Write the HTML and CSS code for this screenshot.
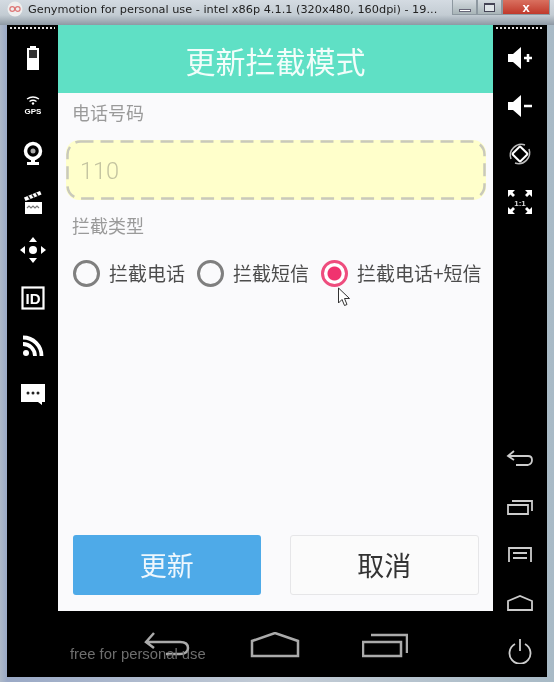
FILE: index.html
```html
<!DOCTYPE html>
<html lang="zh-CN">

<head>
  <meta charset="UTF-8" />
  <meta name="viewport" content="width=device-width, initial-scale=1.0" />
  <title>Genymotion for personal use</title>
  <link rel="stylesheet" href="styles.css">
</head>

<body>
  <div class="window">
    <div class="titlebar">
      <svg class="app-icon" width="16" height="16" viewBox="0 0 16 16">
        <circle cx="8" cy="8" r="7.5" fill="#eee" />
        <circle cx="5.3" cy="8" r="2.4" fill="none" stroke="#d77" stroke-width="1.2" />
        <circle cx="10.7" cy="8" r="2.4" fill="none" stroke="#d77" stroke-width="1.2" />
      </svg>
      <span class="title-text">Genymotion for personal use - intel x86p 4.1.1 (320x480, 160dpi) - 19...</span>
      <div class="controls">
        <div class="ctl ctl-min"><span class="min-glyph"></span></div>
        <div class="ctl ctl-max"><span class="max-glyph"></span></div>
        <div class="ctl ctl-close">x</div>
      </div>
    </div>

    <div class="frame">
      <!-- left toolbar -->
      <div class="side side-left">
        <div class="dots"></div>
        <div class="tool">
          <svg width="20" height="28" viewBox="0 0 20 28">
            <path d="M7 2h6v2h3v22H4V4h3z" fill="#fff" />
            <rect x="6" y="6" width="8" height="8" fill="#333" />
          </svg>
        </div>
        <div class="tool">
          <svg width="24" height="24" viewBox="0 0 24 24">
            <path d="M6 5q6-4 12 0M8.500 7.500q3.500-2.500 7 0" fill="none" stroke="#fff" stroke-width="1.400" />
            <circle cx="12" cy="9.500" r="1.200" fill="#fff" />
            <text x="12" y="20" class="gps">GPS</text>
          </svg>
        </div>
        <div class="tool">
          <svg width="22" height="26" viewBox="0 0 22 26">
            <circle cx="11" cy="10" r="7.500" fill="none" stroke="#fff" stroke-width="3.500" />
            <circle cx="11" cy="10" r="2.500" fill="#aaa" />
            <path d="M9 19h4v2h4v3H5v-3h4z" fill="#fff" />
          </svg>
        </div>
        <div class="tool">
          <svg width="24" height="26" viewBox="0 0 24 26">
            <path d="M4 13h17v12H4z" fill="#fff" />
            <path d="M6 19l2-2 2 2 2-2 2 2 2-2 2 2" fill="none" stroke="#777" stroke-width="1.200" />
            <path d="M3 8.500L19 2l1.500 3.500-16 6.500z" fill="#fff" />
            <path d="M7 7l2 3M11 5.500l2 3M15 4l2 3" stroke="#222" stroke-width="1.400" />
          </svg>
        </div>
        <div class="tool">
          <svg width="28" height="28" viewBox="0 0 28 28">
            <circle cx="14" cy="14" r="4" fill="#fff" />
            <path d="M14 1l4 5h-8zM14 27l4-5h-8zM1 14l5-4v8zM27 14l-5-4v8z" fill="#fff" />
          </svg>
        </div>
        <div class="tool">
          <svg width="24" height="24" viewBox="0 0 24 24">
            <rect x="1.500" y="1.500" width="21" height="21" fill="none" stroke="#fff" stroke-width="2.200" />
            <text x="12" y="17.500" class="id">ID</text>
          </svg>
        </div>
        <div class="tool">
          <svg width="24" height="24" viewBox="0 0 24 24">
            <circle cx="5" cy="19" r="3" fill="#fff" />
            <path d="M2 10a12 12 0 0 1 12 12M2 3.500a18.500 18.500 0 0 1 18.500 18.500" fill="none" stroke="#fff" stroke-width="3.800" />
          </svg>
        </div>
        <div class="tool">
          <svg width="26" height="24" viewBox="0 0 26 24">
            <path d="M1 2h24v18h-3v3l-4-3H1z" fill="#fff" />
            <circle cx="8" cy="11" r="1.500" fill="#222" />
            <circle cx="13" cy="11" r="1.500" fill="#222" />
            <circle cx="18" cy="11" r="1.500" fill="#222" />
          </svg>
        </div>
      </div>

      <!-- phone screen and navigation bar -->
      <div class="center">
        <div class="screen">
          <div class="header">更新拦截模式</div>
          <div class="form">
            <div class="label">电话号码</div>
            <div class="phone-input">
              110
              <svg class="dash" width="420" height="60" viewBox="0 0 420 60">
                <rect x="1.500" y="1.500" width="417" height="57" rx="13" />
              </svg>
            </div>
            <div class="label label-type">拦截类型</div>
            <div class="radios">
              <div class="radio"><span class="dot"></span>拦截电话</div>
              <div class="radio"><span class="dot"></span>拦截短信</div>
              <div class="radio radio-on"><span class="dot"></span>拦截电话+短信</div>
            </div>
            <svg class="cursor" width="14" height="21" viewBox="0 0 14 21">
              <path d="M1.500 1v15l3.500-3.500 2.500 6 2.500-1-2.500-6h5z" fill="#fff" stroke="#333" stroke-width="1" />
            </svg>
          </div>
          <div class="buttons">
            <div class="btn btn-update">更新</div>
            <div class="btn btn-cancel">取消</div>
          </div>
        </div>
        <div class="navbar">
          <svg width="46" height="26" viewBox="0 0 46 26">
            <path d="M10 1L2 10l8 6M2 10h34q8 0 8 6t-8 6H22" fill="none" stroke="#aaa" stroke-width="2.500" />
          </svg>
          <svg width="50" height="26" viewBox="0 0 50 26">
            <path d="M2 24V9L25 1l23 8v15z" fill="none" stroke="#aaa" stroke-width="2.500" />
          </svg>
          <svg class="nav-recent" width="46" height="26" viewBox="0 0 46 26">
            <path d="M1 10h38v14H1zM9 3h36v18" fill="none" stroke="#aaa" stroke-width="2.500" />
          </svg>
          <span class="watermark">free for personal use</span>
        </div>
      </div>

      <!-- right toolbar -->
      <div class="side side-right">
        <div class="dots"></div>
        <div class="tool">
          <svg width="26" height="24" viewBox="0 0 26 24">
            <path d="M1 8h5l8-7v22l-8-7H1z" fill="#fff" />
            <path d="M17 12h8M21 8v8" stroke="#fff" stroke-width="2.500" />
          </svg>
        </div>
        <div class="tool">
          <svg width="26" height="24" viewBox="0 0 26 24">
            <path d="M1 8h5l8-7v22l-8-7H1z" fill="#fff" />
            <path d="M17 12h8" stroke="#fff" stroke-width="2.500" />
          </svg>
        </div>
        <div class="tool">
          <svg width="26" height="26" viewBox="0 0 26 26">
            <path d="M4 18A11 11 0 0 1 18 4M22 8A11 11 0 0 1 8 22" fill="none" stroke="#bbb" stroke-width="1.500" />
            <rect x="7.500" y="7.500" width="11" height="11" rx="1" transform="rotate(45 13 13)" fill="none" stroke="#fff" stroke-width="2" />
          </svg>
        </div>
        <div class="tool">
          <svg width="26" height="26" viewBox="0 0 26 26">
            <path d="M1 1h7L5.500 3.500 8 6 6 8 3.500 5.500 1 8zM25 1h-7l2.500 2.500L18 6l2 2 2.500-2.500L25 8zM1 25h7l-2.500-2.500L8 20l-2-2-2.500 2.500L1 18zM25 25h-7l2.500-2.500L18 20l2-2 2.500 2.500L25 18z" fill="#fff" />
            <text x="13" y="16.500" class="ratio">1:1</text>
          </svg>
        </div>
        <div class="side-bottom">
          <div class="tool">
            <svg width="28" height="20" viewBox="0 0 28 20">
              <path d="M8 2L2 7l6 4M2 7h20q4 0 4 4t-4 5H10" fill="none" stroke="#ccc" stroke-width="1.800" />
            </svg>
          </div>
          <div class="tool">
            <svg width="26" height="18" viewBox="0 0 26 18">
              <path d="M1 7h20v9H1zM5 3h20v10" fill="none" stroke="#ccc" stroke-width="1.800" />
            </svg>
          </div>
          <div class="tool">
            <svg width="26" height="18" viewBox="0 0 26 18">
              <path d="M2 16V2h22v14M6 7h14M6 12h14" fill="none" stroke="#ccc" stroke-width="1.800" />
            </svg>
          </div>
          <div class="tool">
            <svg width="26" height="18" viewBox="0 0 26 18">
              <path d="M1 16V7l12-5 12 5v9z" fill="none" stroke="#ccc" stroke-width="1.800" />
            </svg>
          </div>
          <div class="tool">
            <svg width="24" height="26" viewBox="0 0 24 26">
              <path d="M7 6a10.500 10.500 0 1 0 10 0M12 1v12" fill="none" stroke="#ccc" stroke-width="1.800" />
            </svg>
          </div>
        </div>
      </div>
    </div>
  </div>
</body>

</html>
```

FILE: styles.css
```css
body {
  margin: 0;
  font-family: "Noto Sans CJK SC", "Liberation Sans", sans-serif;
  background-color: #a9b6c6;
}

.window {
  width: 554px;
  height: 682px;
  overflow: hidden;
  display: flex;
  flex-direction: column;
  background: linear-gradient(90deg, #aeb9c8 0, #9aa9c6 7px, #c3ccd6 50%, #a8bac6 100%);
  filter: blur(0.4px);
}

.titlebar {
  height: 25px;
  flex: none;
  display: flex;
  align-items: flex-start;
  padding-left: 7px;
  box-sizing: border-box;
  background: linear-gradient(180deg, #d4dbe2 0, #c3ccd3 60%, #8e99a4 100%);
}

.app-icon {
  margin-top: 1px;
  flex: none;
}

.title-text {
  margin-left: 5px;
  font-family: "DejaVu Sans", sans-serif;
  font-size: 11.300px;
  line-height: 19px;
  color: #222;
  white-space: nowrap;
  width: 415px;
}

.controls {
  display: flex;
  margin-left: 9px;
}

.ctl {
  height: 15px;
  width: 25px;
  box-sizing: border-box;
  border: 1px solid #8d98a0;
  border-top: none;
  background: linear-gradient(180deg, #d3dadf, #a9b5b8);
  display: flex;
  align-items: center;
  justify-content: center;
}

.ctl-close {
  width: 48px;
  background: linear-gradient(180deg, #d9705f, #c0392b);
  color: #fff;
  font: bold 13px/13px "Liberation Sans", sans-serif;
}

.min-glyph {
  width: 12px;
  height: 3px;
  margin-top: 6px;
  background: #fff;
  border: 1px solid #667;
  box-sizing: border-box;
}

.max-glyph {
  width: 11px;
  height: 9px;
  box-sizing: border-box;
  border: 1px solid #445;
  border-top-width: 2px;
  background: #dfe5e8;
}

.frame {
  flex: 1;
  display: flex;
  margin: 0 7px 5px;
  background-color: #000;
}

.side {
  display: flex;
  flex-direction: column;
  align-items: center;
  flex: none;
  position: relative;
  padding-top: 9px;
  box-sizing: border-box;
}

.side-left {
  width: 51px;
}

.side-right {
  width: 54px;
}

.dots {
  position: absolute;
  top: 2px;
  left: 3px;
  right: 3px;
  height: 2px;
  background-image: repeating-linear-gradient(90deg, #ddd 0 2px, transparent 2px 4px);
}

.tool {
  height: 48px;
  display: flex;
  align-items: center;
  justify-content: center;
  flex: none;
}

.side-bottom {
  margin-top: auto;
  margin-bottom: 2px;
}

.center {
  width: 435px;
  flex: none;
  display: flex;
  flex-direction: column;
}

.screen {
  height: 586px;
  flex: none;
  display: flex;
  flex-direction: column;
  background-color: #fafafc;
}

.header {
  height: 68px;
  flex: none;
  background-color: #5fe0c5;
  color: #f2fdfa;
  font-size: 30px;
  line-height: 70px;
  text-align: center;
}

.form {
  flex: 1;
  position: relative;
  display: flex;
  flex-direction: column;
  padding: 8px 7px 0 8px;
}

.label {
  margin-left: 6px;
  font-size: 18px;
  line-height: 22px;
  color: #9a9a9a;
}

.label-type {
  margin-top: 14px;
}

.phone-input {
  margin-top: 17px;
  height: 60px;
  position: relative;
  box-sizing: border-box;
  border-radius: 13px;
  background-color: #ffffcb;
  padding-left: 14px;
  font-family: Roboto, "Liberation Sans", sans-serif;
  font-size: 23.500px;
  font-weight: 300;
  line-height: 62px;
  color: #c4c4a0;
}

.dash {
  position: absolute;
  left: 0;
  top: 0;
}

.dash rect {
  fill: none;
  stroke: #c9c9bb;
  stroke-width: 2.500;
  stroke-dasharray: 13 7;
}

.radios {
  display: flex;
  margin-top: 23px;
  margin-left: 7px;
  gap: 12px;
}

.radio {
  display: flex;
  align-items: center;
  gap: 9px;
  font-size: 19px;
  line-height: 28px;
  color: #4c4c4c;
  white-space: nowrap;
}

.dot {
  width: 27px;
  height: 27px;
  box-sizing: border-box;
  border: 3px solid #7f7f7f;
  border-radius: 50%;
  flex: none;
}

.radio-on .dot {
  border-color: #ee4d7e;
  background: radial-gradient(circle, #f0336f 0 6.500px, #fff 7.500px);
}

.cursor {
  position: absolute;
  left: 279px;
  top: 194px;
}

.buttons {
  display: flex;
  gap: 29px;
  padding: 0 14px 16px 15px;
}

.btn {
  flex: 1;
  height: 60px;
  box-sizing: border-box;
  border-radius: 3px;
  font-size: 27px;
  line-height: 60px;
  text-align: center;
}

.btn-update {
  background-color: #4eaae8;
  color: #eef7fd;
}

.btn-cancel {
  background-color: #fbfbfb;
  color: #333;
  border: 1px solid #e6e6e8;
  line-height: 58px;
}

.navbar {
  flex: 1;
  position: relative;
  display: flex;
  align-items: center;
  padding: 2px 0 0 86px;
  gap: 60px;
}

.nav-recent {
  margin-left: 2px;
}

.watermark {
  position: absolute;
  left: 12px;
  top: 35px;
  font-family: "Liberation Sans", sans-serif;
  font-size: 14.800px;
  color: #6e6e6e;
}

.gps {
  font: bold 8px "Liberation Sans", sans-serif;
  fill: #fff;
  text-anchor: middle;
}

.id {
  font: bold 15px "Liberation Sans", sans-serif;
  fill: #fff;
  text-anchor: middle;
}

.ratio {
  font: bold 8px "Liberation Sans", sans-serif;
  fill: #ddd;
  text-anchor: middle;
}
```
